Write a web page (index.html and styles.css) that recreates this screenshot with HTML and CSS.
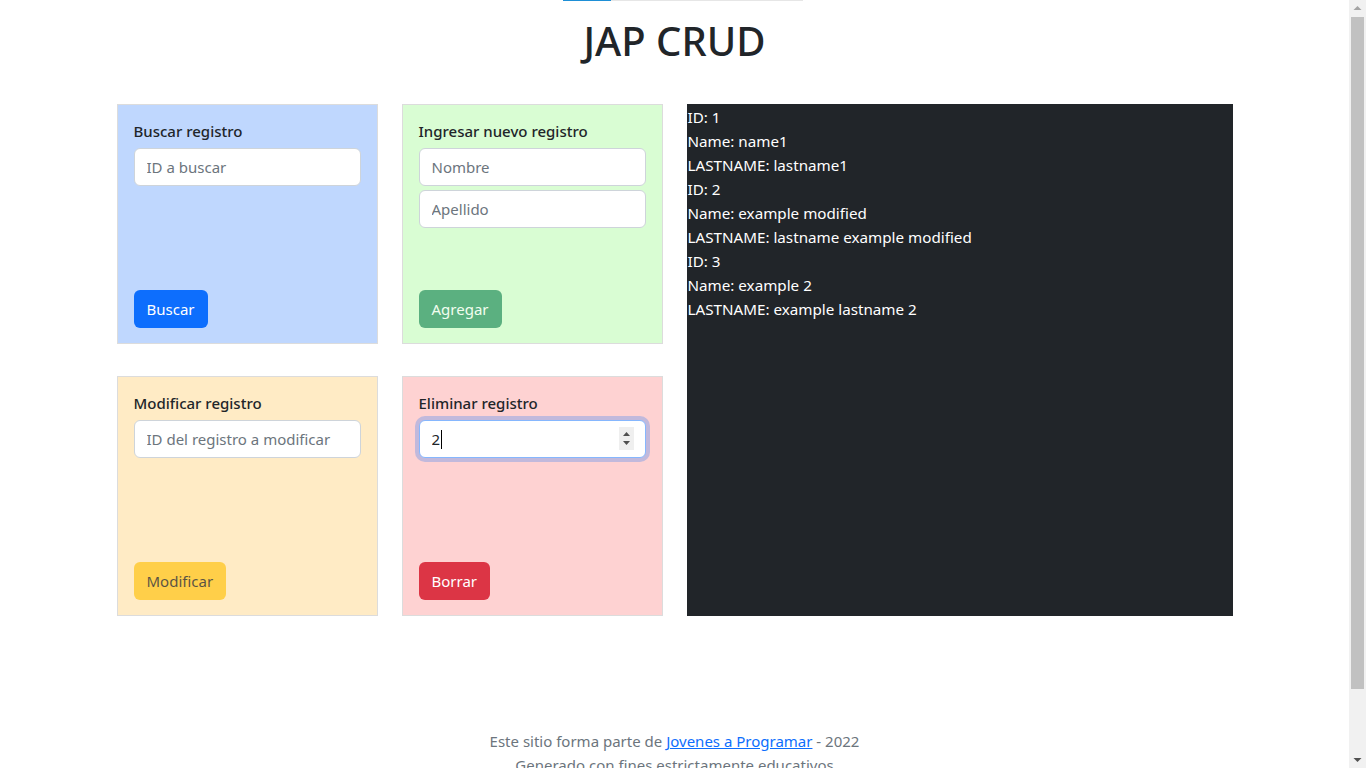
FILE: index.html
```html
<!DOCTYPE html>
<html lang="es">
<head>
<meta charset="utf-8">
<title>JAP CRUD</title>
<link rel="stylesheet" href="styles.css">
</head>
<body>
<div class="progress"><div class="progress-fill"></div></div>
<h1 class="title">JAP CRUD</h1>
<main class="layout">
  <section class="card card-blue">
    <div class="card-top">
      <div class="card-title">Buscar registro</div>
      <input class="field" type="text" placeholder="ID a buscar">
    </div>
    <button class="btn btn-primary">Buscar</button>
  </section>
  <section class="card card-green">
    <div class="card-top">
      <div class="card-title">Ingresar nuevo registro</div>
      <input class="field" type="text" placeholder="Nombre">
      <input class="field" type="text" placeholder="Apellido">
    </div>
    <button class="btn btn-success" disabled>Agregar</button>
  </section>
  <section class="results">
    <div>ID: 1</div>
    <div>Name: name1</div>
    <div>LASTNAME: lastname1</div>
    <div>ID: 2</div>
    <div>Name: example modified</div>
    <div>LASTNAME: lastname example modified</div>
    <div>ID: 3</div>
    <div>Name: example 2</div>
    <div>LASTNAME: example lastname 2</div>
  </section>
  <section class="card card-yellow">
    <div class="card-top">
      <div class="card-title">Modificar registro</div>
      <input class="field" type="text" placeholder="ID del registro a modificar">
    </div>
    <button class="btn btn-warning" disabled>Modificar</button>
  </section>
  <section class="card card-red">
    <div class="card-top">
      <div class="card-title">Eliminar registro</div>
      <div class="number-wrap">
        <input class="field field-focus" type="text" value="2">
        <span class="caret"></span>
        <span class="spinner" aria-hidden="true">
          <svg width="15" height="23" viewBox="0 0 15 23"><path d="M4 9 L7.5 5 L11 9 Z" fill="#505050"/><path d="M4 14 L7.5 18 L11 14 Z" fill="#505050"/></svg>
        </span>
      </div>
    </div>
    <button class="btn btn-danger">Borrar</button>
  </section>
</main>
<footer class="footer">
  <p>Este sitio forma parte de <a href="#">Jovenes a Programar</a> - 2022</p>
  <p>Generado con fines estrictamente educativos</p>
</footer>
<div class="scrollbar" aria-hidden="true">
  <svg class="sb-arrow sb-up" width="17" height="17" viewBox="0 0 17 17"><path d="M4.5 10 L8.5 6 L12.5 10 Z" fill="#a3a3a3"/></svg>
  <div class="sb-track"><div class="sb-thumb"></div></div>
  <svg class="sb-arrow" width="17" height="17" viewBox="0 0 17 17"><path d="M4.5 7 L8.5 11 L12.5 7 Z" fill="#505050"/></svg>
</div>
</body>
</html>
```
FILE: styles.css
```css
body {
  margin: 0 17px 0 0;
  font-family: "Noto Sans", "Open Sans", sans-serif;
  font-size: 15px;
  line-height: 24px;
  color: #212529;
  background: #fff;
}
.progress {
  width: 240px;
  height: 1px;
  margin-left: 563px;
  background: #e6e6e6;
}
.progress-fill {
  width: 48px;
  height: 1px;
  background: #1e8fd6;
}
.title {
  margin: 16px 0 0;
  text-align: center;
  font-size: 40px;
  line-height: 48px;
  font-weight: 500;
}
.layout {
  width: 1116px;
  margin: 39px auto 0;
  display: grid;
  grid-template-columns: 261px 261px 1fr;
  grid-template-rows: 240px 240px;
  column-gap: 24px;
  row-gap: 32px;
}
.card {
  box-sizing: border-box;
  border: 1px solid #dcdcdc;
  padding: 14px 16px 15px;
  display: flex;
  flex-direction: column;
  justify-content: space-between;
  align-items: flex-start;
}
.card-blue { background: #bfd7fe; }
.card-green { background: #d9fdd3; }
.card-yellow { background: #ffebc5; }
.card-red { background: #fed2d2; }
.card-top {
  width: 100%;
}
.card-title {
  font-weight: 500;
  margin-bottom: 5px;
}
.field {
  display: block;
  box-sizing: border-box;
  width: 100%;
  height: 38px;
  margin: 0 0 4px;
  padding: 6px 12px;
  font: inherit;
  color: #212529;
  background: #fff;
  border: 1px solid #ced4da;
  border-radius: 6px;
  outline: none;
}
.field::placeholder {
  color: #6c757d;
}
.field-focus {
  border-color: #86b7fe;
  box-shadow: 0 0 0 4px rgba(13, 110, 253, 0.25);
}
.number-wrap {
  position: relative;
}
.caret {
  position: absolute;
  left: 22px;
  top: 10px;
  width: 1px;
  height: 19px;
  background: #000;
}
.spinner {
  position: absolute;
  right: 12px;
  top: 7px;
  width: 15px;
  height: 23px;
  background: #efefef;
  display: flex;
}
.btn {
  height: 38px;
  padding: 6px 12px;
  font: inherit;
  border: 1px solid transparent;
  border-radius: 6px;
  cursor: pointer;
}
.btn:disabled {
  opacity: 0.65;
}
.btn-primary { background: #0d6efd; color: #fff; }
.btn-success { background: #198754; color: #fff; }
.btn-warning { background: #ffc107; color: #000; }
.btn-danger { background: #dc3545; color: #fff; }
.results {
  grid-column: 3;
  grid-row: 1 / span 2;
  background: #212529;
  color: #fff;
  padding: 1px 1px 0;
  font-size: 15.2px;
}
.footer {
  margin-top: 113px;
  text-align: center;
  color: #6c757d;
}
.footer p {
  margin: 0;
}
.footer a {
  color: #0d6efd;
}
.scrollbar {
  position: fixed;
  top: 0;
  right: 0;
  bottom: 0;
  width: 17px;
  background: #f1f1f1;
  display: flex;
  flex-direction: column;
}
.sb-arrow {
  flex: none;
  display: block;
}
.sb-track {
  flex: 1;
  position: relative;
}
.sb-thumb {
  position: absolute;
  left: 2px;
  right: 2px;
  top: 0;
  height: 672px;
  background: #c1c1c1;
}
```
